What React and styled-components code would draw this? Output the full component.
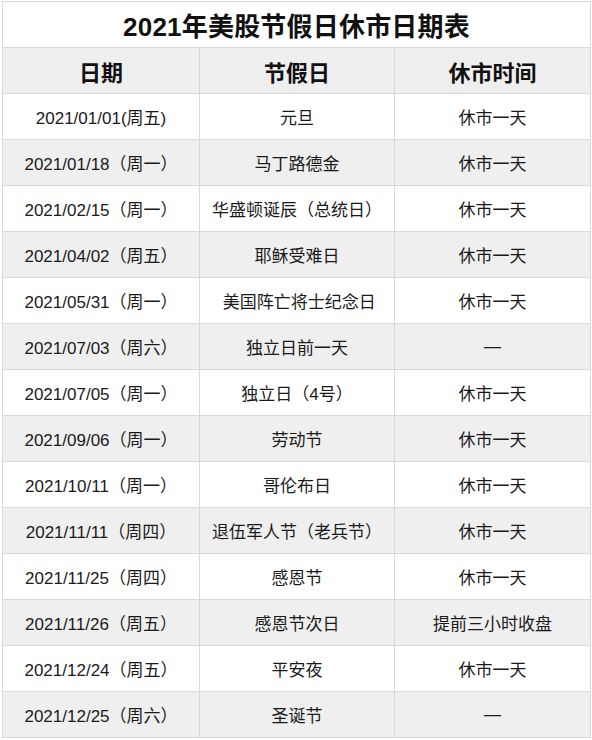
import React from 'react'
import styled, { createGlobalStyle } from 'styled-components'

const GlobalStyle = createGlobalStyle`
  html, body {
    margin: 0;
    padding: 0;
    background: #fff;
  }
  body {
    font-family: "Liberation Sans", "Noto Sans CJK SC", sans-serif;
    color: #111;
  }
`

const holidays = [
  ['2021/01/01(周五)', '元旦', '休市一天'],
  ['2021/01/18（周一）', '马丁路德金', '休市一天'],
  ['2021/02/15（周一）', '华盛顿诞辰（总统日）', '休市一天'],
  ['2021/04/02（周五）', '耶稣受难日', '休市一天'],
  ['2021/05/31（周一）', '\u00a0美国阵亡将士纪念日', '休市一天'],
  ['2021/07/03（周六）', '独立日前一天', '—'],
  ['2021/07/05（周一）', '独立日（4号）', '休市一天'],
  ['2021/09/06（周一）', '劳动节', '休市一天'],
  ['2021/10/11（周一）', '哥伦布日', '休市一天'],
  ['2021/11/11（周四）', '退伍军人节（老兵节）', '休市一天'],
  ['2021/11/25（周四）', '感恩节', '休市一天'],
  ['2021/11/26（周五）', '感恩节次日', '提前三小时收盘'],
  ['2021/12/24（周五）', '平安夜', '休市一天'],
  ['2021/12/25（周六）', '圣诞节', '—'],
]

export default function App() {
  return (
    <Page>
      <GlobalStyle />
      <Table>
        <colgroup>
          <col style={{ width: 197 }} />
          <col style={{ width: 195 }} />
          <col style={{ width: 196 }} />
        </colgroup>
        <thead>
          <tr>
            <Title colSpan={3}>2021年美股节假日休市日期表</Title>
          </tr>
          <Row $shaded>
            <Head>日期</Head>
            <Head>节假日</Head>
            <Head>休市时间</Head>
          </Row>
        </thead>
        <tbody>
          {holidays.map(([date, name, status], i) => (
            <Row key={date} $shaded={i % 2 === 1}>
              <Cell>{date}</Cell>
              <Cell>{name}</Cell>
              <Cell>{status}</Cell>
            </Row>
          ))}
        </tbody>
      </Table>
    </Page>
  )
}

const Page = styled.div`
  padding: 1px 0 0 2px;
`

const Table = styled.table`
  border-collapse: collapse;
  table-layout: fixed;
  width: 589px;

  th, td {
    border: 1px solid #d9d9d9;
    height: 46px;
    padding: 0;
    text-align: center;
    vertical-align: middle;
    box-sizing: border-box;
  }
`

const Row = styled.tr`
  background: ${p => (p.$shaded ? '#efefef' : '#fff')};
`

const Title = styled.th`
  background: #fff;
  font-size: 26px;
  font-weight: bold;
  color: #111;
  letter-spacing: 0.2px;
`

const Head = styled.th`
  font-size: 22px;
  font-weight: bold;
  color: #111;
`

const Cell = styled.td`
  font-size: 17px;
  color: #1a1a1a;
  white-space: nowrap;
`
